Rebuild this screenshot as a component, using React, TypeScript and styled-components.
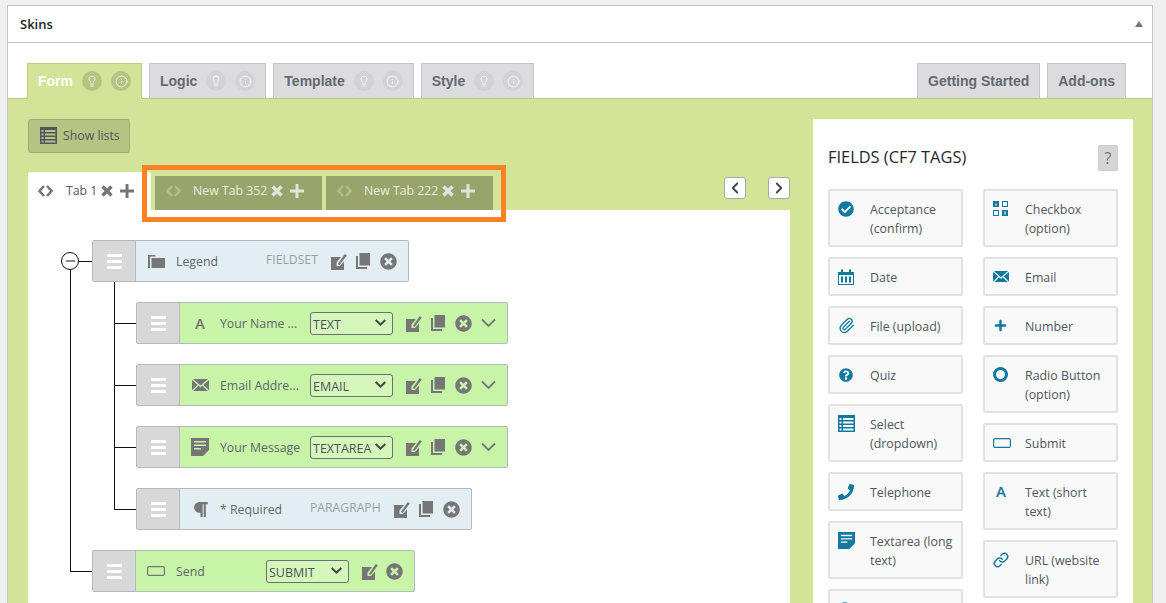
import React from 'react'
import styled, { createGlobalStyle } from 'styled-components'
import { ChevronLeft, ChevronRight, Info, Lightbulb, Link as LinkIcon, Paperclip } from 'lucide-react'
import { FaCheckCircle, FaCircle, FaParagraph, FaPhone, FaPlus, FaQuestionCircle, FaTimesCircle } from 'react-icons/fa'

const GlobalStyle = createGlobalStyle`
  html, body {
    margin: 0;
    height: 603px;
    overflow: hidden;
    background: #f0f0f1;
    font-family: 'Open Sans', 'Liberation Sans', sans-serif;
  }
  * { box-sizing: border-box; }
`

const Panel = styled.div`
  margin: 5px 13px 0 7px;
  height: 640px;
  background: #fff;
  border: 1px solid #c3c4c7;
`

const PanelHeader = styled.div`
  height: 37px;
  padding: 0 9px 0 12px;
  display: flex;
  align-items: center;
  justify-content: space-between;
  border-bottom: 1px solid #c3c4c7;
  font-size: 13px;
  font-weight: 600;
  color: #1d2327;
`

const CollapseArrow = styled.span`
  width: 0;
  height: 0;
  border-left: 4px solid transparent;
  border-right: 4px solid transparent;
  border-bottom: 6px solid #72777c;
`

const TabBar = styled.div`
  display: flex;
  align-items: flex-start;
  gap: 7px;
  padding: 20px 26px 0 19px;
  height: 55px;
`

const Tab = styled.div<{ $active?: boolean; $push?: boolean }>`
  height: ${p => (p.$active ? '36px' : '35px')};
  display: flex;
  align-items: center;
  gap: 9px;
  padding: ${p => (p.$active ? '0 10px 1px' : '0 10px')};
  margin-left: ${p => (p.$push ? 'auto' : '0')};
  background: ${p => (p.$active ? '#d3e397' : '#dcdcde')};
  border: 1px solid ${p => (p.$active ? '#bccb85' : '#c3c4c7')};
  border-bottom: none;
  font: bold 14px 'Liberation Sans', Arial, sans-serif;
  color: ${p => (p.$active ? '#fff' : '#646970')};
  position: relative;
  z-index: 1;
`

const TabHint = styled.span<{ $active?: boolean }>`
  width: 20px;
  height: 20px;
  border-radius: 50%;
  display: flex;
  align-items: center;
  justify-content: center;
  color: #fff;
  background: ${p => (p.$active ? '#b5c383' : '#d3d3d5')};
`

const GreenBody = styled.div`
  display: flex;
  gap: 23px;
  padding: 20px 19px 0 20px;
  height: 560px;
  background: #d3e397;
  border-top: 1px solid #bccb85;
`

const Builder = styled.div`
  width: 762px;
  flex: none;
`

const ShowLists = styled.div`
  width: 102px;
  height: 34px;
  display: flex;
  align-items: center;
  gap: 6px;
  padding: 0 0 1px 11px;
  background: #b5c383;
  border: 1px solid #9fad72;
  border-radius: 3px;
  font-size: 12.3px;
  color: #50575e;
  & > span {
    margin-top: -1px;
  }
`

const TabStrip = styled.div`
  position: relative;
  margin-top: 19px;
  height: 38px;
  display: flex;
  align-items: flex-end;
  gap: 4px;
`

const FormTab = styled.div<{ $active?: boolean }>`
  width: ${p => (p.$active ? '123px' : '167px')};
  height: ${p => (p.$active ? '38px' : '34px')};
  display: flex;
  align-items: center;
  padding: ${p => (p.$active ? '0 0 0 10px' : '0 0 4px 11px')};
  background: ${p => (p.$active ? '#fff' : '#98a46c')};
  border-radius: ${p => (p.$active ? '3px 3px 0 0' : '0')};
  font-size: 12.3px;
  color: ${p => (p.$active ? '#50575e' : '#e9ecdf')};
`

const FormTabTitle = styled.span<{ $active?: boolean }>`
  margin: -1px 4px 0 ${p => (p.$active ? '13px' : '12px')};
`

const TabCode = styled.svg<{ $active?: boolean }>`
  width: 15px;
  height: 12px;
  fill: none;
  stroke: ${p => (p.$active ? '#757575' : '#b3c07f')};
  stroke-width: 2.4;
`

const TabAction = styled.svg<{ $active?: boolean; $gap?: number }>`
  flex: none;
  margin-left: ${p => p.$gap ?? 0}px;
  fill: none;
  stroke: ${p => (p.$active ? '#757575' : '#e2e4dc')};
`

const NavButton = styled.div<{ $first?: boolean }>`
  width: 22px;
  height: 22px;
  margin: 0 ${p => (p.$first ? '18px' : '0')} 11px ${p => (p.$first ? 'auto' : '0')};
  display: flex;
  align-items: center;
  justify-content: center;
  background: #fff;
  border: 1px solid #a7aaad;
  border-radius: 3px;
  color: #3c434a;
`

/* orange annotation drawn over the tab strip */
const Highlight = styled.div`
  position: absolute;
  left: 114px;
  top: -7px;
  width: 364px;
  height: 57px;
  border: 5px solid #fb8122;
  pointer-events: none;
`

const Canvas = styled.div`
  height: 420px;
  padding: 30px 0 0 64px;
  background: #fff;
`

const Tree = styled.div`
  position: relative;
  display: flex;
  flex-direction: column;
  gap: 20px;
  &::before {
    content: '';
    position: absolute;
    left: -22px;
    top: 21px;
    bottom: 21px;
    width: 1px;
    background: #111;
  }
`

const Branch = styled.div`
  position: relative;
  margin-left: 44px;
  display: flex;
  flex-direction: column;
  gap: 20px;
  &::before {
    content: '';
    position: absolute;
    left: -22px;
    top: -20px;
    bottom: 21px;
    width: 1px;
    background: #111;
  }
`

const Collapse = styled.span`
  position: absolute;
  left: -31px;
  top: 12px;
  width: 18px;
  height: 18px;
  z-index: 1;
  border: 1px solid #111;
  border-radius: 50%;
  background: #fff;
  display: flex;
  align-items: center;
  justify-content: center;
  &::after {
    content: '';
    width: 9px;
    height: 2px;
    background: #8a8a8a;
  }
`

const Row = styled.div<{ $tone: 'blue' | 'green' }>`
  position: relative;
  width: fit-content;
  height: 42px;
  display: flex;
  align-items: stretch;
  border: 1px solid #b4b9be;
  border-radius: 2px;
  background: ${p => (p.$tone === 'blue' ? '#e3eef3' : '#c8f4a8')};
  &::before {
    content: '';
    position: absolute;
    left: -23px;
    top: 20px;
    width: 22px;
    height: 1px;
    background: #111;
  }
`

const Handle = styled.div`
  width: 43px;
  flex: none;
  background: #d8d8d8;
  border-right: 1px solid #b4b9be;
  display: flex;
  flex-direction: column;
  align-items: center;
  justify-content: center;
  gap: 3px;
  & > i {
    width: 15px;
    height: 3px;
    background: #fff;
  }
`

const RowBody = styled.div`
  display: flex;
  align-items: center;
  padding-right: 11px;
  color: #767676;
`

const RowIcon = styled.span`
  width: 40px;
  display: flex;
  justify-content: center;
  font-size: 15px;
  font-weight: 600;
  color: #767676;
`

const RowLabel = styled.span`
  width: 90px;
  font-size: 12.3px;
  color: #60676d;
  white-space: nowrap;
`

const TypeText = styled.span`
  font-size: 12.2px;
  color: #9a9ea2;
  margin: -4px 13px 0 0;
`

const TypeSelect = styled.div`
  width: 83px;
  height: 23px;
  margin-right: 13px;
  padding: 3px 0 0 2px;
  position: relative;
  border: 1px solid #6c7175;
  border-radius: 3px;
  background: #d6f7bc;
  font-size: 12.5px;
  color: #4d5358;
  & > svg {
    position: absolute;
    right: 6px;
    top: 6px;
    color: #444;
  }
`

const Actions = styled.div`
  display: flex;
  align-items: center;
  color: #767676;
`

const Action = styled.span<{ $gap?: number }>`
  display: flex;
  margin-left: ${p => p.$gap ?? 0}px;
`

const RowToggle = styled.span`
  display: flex;
  margin-left: 9px;
  color: #767676;
`

const FieldsPanel = styled.div`
  width: 320px;
  flex: none;
  height: 520px;
  padding: 26px 15px 0;
  background: #fff;
`

const FieldsHeader = styled.div`
  height: 26px;
  margin-bottom: 18px;
  display: flex;
  align-items: center;
  justify-content: space-between;
  font-size: 16.4px;
  font-weight: 500;
  color: #23282d;
  & > span:first-child {
    margin-top: -3px;
  }
`

const HelpButton = styled.span`
  width: 20px;
  height: 26px;
  display: flex;
  align-items: center;
  justify-content: center;
  background: #d5d5d5;
  border: 1px solid #ccc;
  border-radius: 2px;
  font-size: 16px;
  font-weight: 400;
  color: #767676;
`

const FieldColumns = styled.div`
  display: flex;
  gap: 20px;
`

const FieldColumn = styled.div`
  width: 135px;
  display: flex;
  flex-direction: column;
  gap: 10px;
`

const FieldItem = styled.div`
  display: flex;
  min-height: 39px;
  padding: 9px 8px 7px;
  background: #f9f9f9;
  border: 2px solid #e2e2e2;
  border-radius: 2px;
  font-size: 12.4px;
  line-height: 19px;
  color: #50575e;
`

const FieldIcon = styled.span`
  width: 32px;
  height: 19px;
  margin-top: -1px;
  flex: none;
  display: flex;
  align-items: center;
  color: #11789f;
`

const FieldGlyph = styled.span`
  font-size: 15px;
  font-weight: 600;
  padding-left: 3px;
`

const CodeIcon = ({ active }: { active?: boolean }) => (
  <TabCode $active={active} viewBox="0 0 15 12">
    <path d="M6 1 1.500 6 6 11M9 1l4.500 5L9 11" />
  </TabCode>
)

const TabRemove = ({ active }: { active?: boolean }) => (
  <TabAction $active={active} width="12" height="12" viewBox="0 0 12 12" strokeWidth="3.400">
    <path d="M1.500 1.500l9 9M10.500 1.500l-9 9" />
  </TabAction>
)

const TabAdd = ({ active }: { active?: boolean }) => (
  <TabAction $active={active} $gap={7} width="14" height="14" viewBox="0 0 14 14" strokeWidth="3">
    <path d="M7 0v14M0 7h14" />
  </TabAction>
)

const EditIcon = () => (
  <svg width="16" height="18" viewBox="0 0 16 18" fill="currentColor">
    <path d="M0 5h10L5.500 10.500V14H9l4-4.500V18H0z" />
    <path d="M6.800 12 13.800 2l2 1.500L8.500 13z" />
  </svg>
)

const CopyIcon = () => (
  <svg width="14" height="16" viewBox="0 0 14 16" fill="currentColor">
    <path d="M3.500 0H14v12.500H3.500z" />
    <path d="M0 3h2v11h9v2H0z" />
  </svg>
)

const RemoveIcon = () => <FaTimesCircle size={17} />

const RowChevron = () => (
  <svg width="15" height="10" viewBox="0 0 15 10" fill="none" stroke="currentColor" strokeWidth="1.800">
    <path d="M1 1.500 7.500 8 14 1.500" />
  </svg>
)

const SelectChevron = () => (
  <svg width="11" height="7" viewBox="0 0 11 7" fill="none" stroke="currentColor" strokeWidth="2">
    <path d="M.7 1 5.500 5.600 10.300 1" />
  </svg>
)

const FolderIcon = () => (
  <svg width="17" height="13" viewBox="0 0 17 13" fill="currentColor">
    <path d="M0 0h7l1 1.500H2V13H0z" />
    <path d="M3.500 3H17v10H3.500z" />
  </svg>
)

const EnvelopeIcon = ({ width = 17 }: { width?: number }) => (
  <svg width={width} height={width * 0.72} viewBox="0 0 18 13" fill="currentColor">
    <path d="M1 0h16L9 7z" />
    <path d="M0 1v11l6-6z" />
    <path d="M18 1v11l-6-6z" />
    <path d="M1 13h16l-6-6-2 2-2-2z" />
  </svg>
)

const NoteIcon = ({ size = 18 }: { size?: number }) => (
  <svg width={size} height={size} viewBox="0 0 18 18" fill="currentColor" fillRule="evenodd">
    <path d="M0 0h18v12l-6 6H0zM3 3h12v1.500H3zM3 6.500h12V8H3zM3 10h7v1.500H3z" />
  </svg>
)

const ButtonIcon = ({ width = 18 }: { width?: number }) => (
  <svg width={width} height="10" viewBox="0 0 18 10" fill="none" stroke="currentColor" strokeWidth="1.200">
    <rect x="0.600" y="0.600" width="16.800" height="8.800" rx="1.500" />
  </svg>
)

const ListIcon = ({ size = 17 }: { size?: number }) => (
  <svg width={size} height={size} viewBox="0 0 17 17" fill="currentColor" fillRule="evenodd">
    <path d="M0 0h17v17H0zM1.500 3v2h2V3zM5 3v2h10.500V3zM1.500 6.500v2h2v-2zM5 6.500v2h10.500v-2zM1.500 10v2h2v-2zM5 10v2h10.500v-2zM1.500 13.500v2h2v-2zM5 13.500v2h10.500v-2z" />
  </svg>
)

const CheckboxIcon = () => (
  <svg width="15" height="15" viewBox="0 0 15 15" fill="currentColor" fillRule="evenodd">
    <path d="M0 0h6v6H0zM2 2l.8 1L2 4l1 .8L4 4l-.8-1L4 2l-1 .8z" />
    <path d="M9 0h6v6H9zm1 1v4h4V1z" />
    <path d="M0 9h6v6H0zm1 1v4h4v-4z" />
    <path d="M9 9h6v6H9zM11 11l.8 1-.8 1 1 .8 1-.8-.8-1 .8-1-1-.8z" />
  </svg>
)

const CalendarIcon = () => (
  <svg width="16" height="16" viewBox="0 0 16 16" fill="currentColor">
    <rect x="0" y="3" width="16" height="3" />
    <rect x="3" y="0.500" width="2" height="4" />
    <rect x="11" y="0.500" width="2" height="4" />
    <path d="M0 6h1v9h14V6h1v10H0z" />
    <rect x="3" y="7.500" width="2" height="6" />
    <rect x="7" y="7.500" width="2" height="6" />
    <rect x="11" y="7.500" width="2" height="6" />
  </svg>
)

const RadioIcon = () => (
  <svg width="15" height="15" viewBox="0 0 15 15" fill="none" stroke="currentColor" strokeWidth="3">
    <circle cx="7.500" cy="7.500" r="6" />
  </svg>
)

const fieldColumns: { label: string; icon: React.ReactNode }[][] = [
  [
    { label: 'Acceptance (confirm)', icon: <FaCheckCircle size={16} /> },
    { label: 'Date', icon: <CalendarIcon /> },
    { label: 'File (upload)', icon: <Paperclip size={17} strokeWidth={1.8} /> },
    { label: 'Quiz', icon: <FaQuestionCircle size={14} style={{ marginLeft: 1 }} /> },
    { label: 'Select (dropdown)', icon: <ListIcon /> },
    { label: 'Telephone', icon: <FaPhone size={16} /> },
    { label: 'Textarea (long text)', icon: <NoteIcon size={17} /> },
    { label: '', icon: <FaCircle size={14} /> },
  ],
  [
    { label: 'Checkbox (option)', icon: <CheckboxIcon /> },
    { label: 'Email', icon: <EnvelopeIcon width={16} /> },
    { label: 'Number', icon: <FaPlus size={13} style={{ marginLeft: 1 }} /> },
    { label: 'Radio Button (option)', icon: <RadioIcon /> },
    { label: 'Submit', icon: <ButtonIcon /> },
    { label: 'Text (short text)', icon: <FieldGlyph>A</FieldGlyph> },
    { label: 'URL (website link)', icon: <LinkIcon size={16} strokeWidth={2.2} /> },
  ],
]

const tabs = ['Form', 'Logic', 'Template', 'Style']

const Handlebar = () => (
  <Handle>
    <i />
    <i />
    <i />
  </Handle>
)

type FieldRowProps = {
  tone: 'blue' | 'green'
  icon: React.ReactNode
  label: string
  type?: string
  select?: string
  noCopy?: boolean
  toggle?: boolean
}

const FieldRow = ({ tone, icon, label, type, select, noCopy, toggle }: FieldRowProps) => (
  <Row $tone={tone}>
    <Handlebar />
    <RowBody>
      <RowIcon>{icon}</RowIcon>
      <RowLabel>{label}</RowLabel>
      {type && <TypeText>{type}</TypeText>}
      {select && (
        <TypeSelect>
          {select}
          <SelectChevron />
        </TypeSelect>
      )}
      <Actions>
        <Action>
          <EditIcon />
        </Action>
        {!noCopy && (
          <Action $gap={9}>
            <CopyIcon />
          </Action>
        )}
        <Action $gap={noCopy ? 8 : 10}>
          <RemoveIcon />
        </Action>
      </Actions>
      {toggle && (
        <RowToggle>
          <RowChevron />
        </RowToggle>
      )}
    </RowBody>
  </Row>
)

const App = () => (
  <>
    <GlobalStyle />
    <Panel>
      <PanelHeader>
        Skins
        <CollapseArrow />
      </PanelHeader>
      <TabBar>
        {tabs.map((name, i) => (
          <Tab key={name} $active={i === 0}>
            {name}
            <TabHint $active={i === 0}>
              <Lightbulb size={12} strokeWidth={1.6} />
            </TabHint>
            <TabHint $active={i === 0}>
              <Info size={13} strokeWidth={1.4} />
            </TabHint>
          </Tab>
        ))}
        <Tab $push>Getting Started</Tab>
        <Tab>Add-ons</Tab>
      </TabBar>
      <GreenBody>
        <Builder>
          <ShowLists>
            <ListIcon />
            <span>Show lists</span>
          </ShowLists>
          <TabStrip>
            <FormTab $active>
              <CodeIcon active />
              <FormTabTitle $active>Tab 1</FormTabTitle>
              <TabRemove active />
              <TabAdd active />
            </FormTab>
            <FormTab>
              <CodeIcon />
              <FormTabTitle>New Tab 352</FormTabTitle>
              <TabRemove />
              <TabAdd />
            </FormTab>
            <FormTab>
              <CodeIcon />
              <FormTabTitle>New Tab 222</FormTabTitle>
              <TabRemove />
              <TabAdd />
            </FormTab>
            <NavButton $first>
              <ChevronLeft size={18} strokeWidth={2.4} />
            </NavButton>
            <NavButton>
              <ChevronRight size={18} strokeWidth={2.4} />
            </NavButton>
            <Highlight />
          </TabStrip>
          <Canvas>
            <Tree>
              <Collapse />
              <FieldRow tone="blue" icon={<FolderIcon />} label="Legend" type="FIELDSET" />
              <Branch>
                <FieldRow tone="green" icon="A" label="Your Name ..." select="TEXT" toggle />
                <FieldRow tone="green" icon={<EnvelopeIcon />} label="Email Addre..." select="EMAIL" toggle />
                <FieldRow tone="green" icon={<NoteIcon />} label="Your Message" select="TEXTAREA" toggle />
                <FieldRow tone="blue" icon={<FaParagraph size={17} />} label="* Required" type="PARAGRAPH" />
              </Branch>
              <FieldRow tone="green" icon={<ButtonIcon />} label="Send" select="SUBMIT" noCopy />
            </Tree>
          </Canvas>
        </Builder>
        <FieldsPanel>
          <FieldsHeader>
            <span>FIELDS (CF7 TAGS)</span>
            <HelpButton>?</HelpButton>
          </FieldsHeader>
          <FieldColumns>
            {fieldColumns.map((items, c) => (
              <FieldColumn key={c}>
                {items.map((item, i) => (
                  <FieldItem key={i}>
                    <FieldIcon>{item.icon}</FieldIcon>
                    <span>{item.label}</span>
                  </FieldItem>
                ))}
              </FieldColumn>
            ))}
          </FieldColumns>
        </FieldsPanel>
      </GreenBody>
    </Panel>
  </>
)

export default App
